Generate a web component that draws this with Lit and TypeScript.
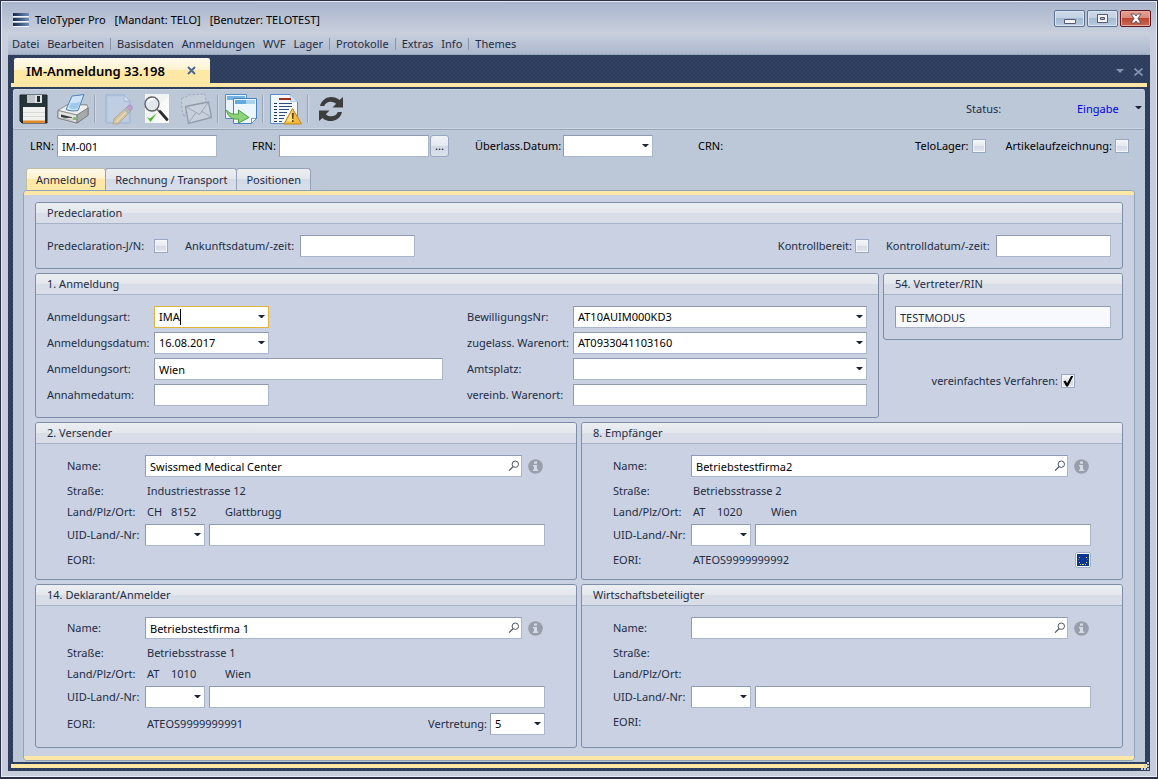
import { LitElement, html, css, svg, nothing } from "lit";
import { customElement, property } from "lit/decorators.js";

const controls = css`
  *,
  *::before,
  *::after {
    box-sizing: border-box;
  }
  button,
  input,
  select {
    font: inherit;
    color: inherit;
    margin: 0;
  }
  button {
    padding: 0;
    border: 0;
    background: none;
    display: inline-flex;
    align-items: center;
    justify-content: center;
  }
  svg {
    display: block;
    flex: none;
  }
  .box {
    display: block;
    width: 100%;
    min-width: 0;
    height: 22px;
    padding: 0 4px;
    border: 1px solid;
    border-color: #8e9bb3 #aab6cb #aab6cb #8e9bb3;
    border-radius: 0;
    background: #fff;
    color: #000;
    outline: none;
    appearance: none;
  }
  .box:disabled {
    background: #f7f9fd;
    color: #1e2c44;
    opacity: 1;
  }
  .combo {
    position: relative;
    display: block;
    min-width: 0;
  }
  .combo .arrow {
    position: absolute;
    right: 4px;
    top: 9px;
    pointer-events: none;
  }
  .combo.active .box {
    border-color: #e0b53a;
  }
  .caret {
    position: absolute;
    left: 26px;
    top: 3px;
    width: 1px;
    height: 16px;
    background: #000;
  }
  .tick {
    appearance: none;
    flex: none;
    width: 14px;
    height: 14px;
    border: 1px solid #98a8c2;
    background: linear-gradient(#f4f6f9, #e6e9ef 50%, #d5dae6 50%, #e0e4ec);
    box-shadow: inset 0 0 0 1px #f4f6fa;
    display: grid;
    place-items: center;
  }
  .tick:checked::after {
    content: "";
    width: 11px;
    height: 11px;
    background: #000;
    clip-path: polygon(8% 52%, 28% 46%, 42% 70%, 78% 4%, 98% 4%, 50% 100%, 34% 100%);
  }
`;

const arrow = html`<svg class="arrow" width="7" height="5" viewBox="0 0 7 5">
  <path d="M.5 0h6v1H6L4 3H3L1 1H.5z" fill="#1b2536" />
</svg>`;

const combo = (id: string, options: string[], cls = "", caret = false) => html`
  <span class="combo ${cls}">
    <select class="box" id=${id}>
      ${options.map((o) => html`<option>${o}</option>`)}
    </select>
    ${caret ? html`<span class="caret"></span>` : nothing} ${arrow}
  </span>
`;

@customElement("group-box")
export class GroupBox extends LitElement {
  @property() heading = "";

  static styles = css`
    :host {
      display: block;
      box-sizing: border-box;
      min-width: 0;
      border: 1px solid #7f8ea8;
      border-radius: 3px;
      overflow: hidden;
    }
    .heading {
      box-sizing: border-box;
      margin: 0;
      height: 21px;
      padding: 0 11px;
      border-bottom: 1px solid #a5b2c8;
      background: linear-gradient(#ebeef1, #e3e7ec 50%, #d9dde7 50%, #d9dde7);
      font-size: 11px;
      font-weight: 400;
      line-height: 20px;
    }
    .body {
      padding: 11px;
    }
  `;

  render() {
    return html`<h2 class="heading">${this.heading}</h2>
      <div class="body"><slot></slot></div>`;
  }
}

interface Party {
  heading: string;
  name: string;
  street: string;
  country: string;
  zip: string;
  city: string;
  eori: string;
  agency?: string;
  euCheck?: boolean;
}

@customElement("party-panel")
export class PartyPanel extends LitElement {
  @property({ attribute: false }) party!: Party;

  static styles = [
    controls,
    css`
      :host {
        display: flex;
        min-width: 0;
      }
      group-box {
        flex: 1;
      }
      .rows {
        padding: 0 20px;
        margin-bottom: -3px;
      }
      .row {
        display: flex;
        align-items: center;
        height: 22px;
      }
      .text {
        height: 21px;
      }
      .first {
        margin-bottom: 3px;
      }
      .uid {
        margin-top: 2px;
        margin-bottom: 3px;
      }
      .agency {
        height: 28px;
        padding: 2px 0 4px;
      }
      .label {
        flex: none;
        width: 78px;
        white-space: nowrap;
      }
      .value {
        padding-left: 2px;
      }
      .country {
        width: 26px;
      }
      .zip {
        width: 54px;
      }
      .search {
        position: relative;
        flex: 1;
        min-width: 0;
      }
      .search .box {
        padding-right: 20px;
      }
      .lens {
        position: absolute;
        right: 1px;
        top: 3px;
        width: 14px;
        height: 16px;
      }
      .info {
        margin: 0 2px 0 6px;
      }
      .land {
        flex: none;
        width: 60px;
        margin-right: 4px;
      }
      .end {
        margin-left: auto;
        display: flex;
        align-items: center;
        gap: 3px;
      }
      .vertretung {
        width: 55px;
      }
      .eu {
        width: 16px;
        height: 16px;
        border: 1px solid #a3afc4;
        border-radius: 2px;
        background: #f2f4f8;
      }
    `,
  ];

  render() {
    const p = this.party;
    return html`
      <group-box .heading=${p.heading}>
        <div class="rows">
          <div class="row first">
            <label class="label" for="name">Name:</label>
            <span class="search">
              <input class="box" id="name" type="text" .value=${p.name} />
              <button class="lens" aria-label="Suchen">
                <svg width="12" height="12" viewBox="0 0 12 12" fill="none" stroke="#4d5563">
                  <circle cx="7.3" cy="4.2" r="3.2" />
                  <path d="M5 6.7L1 10.6" stroke-width="1.2" />
                </svg>
              </button>
            </span>
            <button class="info" aria-label="Information">
              <svg width="15" height="15" viewBox="0 0 15 15">
                <circle cx="7.5" cy="7.5" r="7.3" fill="#989fab" />
                <path d="M6 2.5h3v2.3H6zM5 6h4v4.5h1.200v1.500H5v-1.500h1V7.500H5z" fill="#d3dae8" />
              </svg>
            </button>
          </div>
          <div class="row text">
            <span class="label">Straße:</span><span class="value">${p.street}</span>
          </div>
          <div class="row text">
            <span class="label">Land/Plz/Ort:</span>
            <span class="value country">${p.country}</span>
            <span class="zip">${p.zip}</span>
            <span>${p.city}</span>
          </div>
          <div class="row uid">
            <label class="label" for="uid-land">UID-Land/-Nr:</label>
            ${combo("uid-land", [""], "land")}
            <input class="box" type="text" aria-label="UID-Nr" />
          </div>
          <div class="row ${p.agency ? "agency" : ""}">
            <span class="label">EORI:</span><span class="value">${p.eori}</span>
            ${p.agency
              ? html`<span class="end"
                  ><label for="vertretung">Vertretung:</label>${combo(
                    "vertretung",
                    [p.agency],
                    "vertretung",
                  )}</span
                >`
              : nothing}
            ${p.euCheck
              ? html`<span class="end">
                  <button class="eu" aria-label="EORI prüfen">
                    <svg width="12" height="12" viewBox="0 0 12 12">
                      <path d="M0 0h12v12H0z" fill="#0a3590" />
                      <path
                        d="M2 3h1v1H2zM9 3h1v1H9zM2 8h1v1H2zM9 8h1v1H9zM3 10h1v1H3zM5 10h2v1H5zM8 10h1v1H8z"
                        fill="#e8d24a"
                      />
                      <path d="M1 5h1v1H1zM10 5h1v1h-1z" fill="#5c7188" />
                    </svg>
                  </button>
                </span>`
              : nothing}
          </div>
        </div>
      </group-box>
    `;
  }
}

const icons = {
  save: svg`
    <path d="M2 2h27v28H4l-2-2z" fill="#26343a"/>
    <path d="M2 2h27v28H4l-2-2z" fill="none" stroke="#1a2529"/>
    <path d="M9 2h15v8H9z" fill="#dfe2e4"/>
    <path d="M9 2h8v8H9z" fill="#bfc4c8"/>
    <path d="M19 3h3v6h-3z" fill="#222b30"/>
    <path d="M5 14h22v15H5z" fill="#f1f1ef"/>
    <path d="M5 19h22v1H5zM5 23h22v1H5z" fill="#d9dad8"/>
    <path d="M5 27.500h22V30H5z" fill="#e08a2a"/>`,
  print: svg`
    <path d="M1 17.500L10 12h20l1 3v7l-11 8L1 25z" fill="#d5d6d4" stroke="#74787a"/>
    <path d="M1 17.500L10 12h20l1 3-11 7z" fill="#efefed" stroke="#8c9092" stroke-width=".7"/>
    <path d="M9 16.500L15 3c4-.2 8-1 12-1.500l-6 16c-4 .8-8 .5-12-1z" fill="#cfe3f7" stroke="#4f83b8"/>
    <path d="M14 10c4 0 6-.3 9-1l-2.500 6.500c-3 .7-6 .4-8.500-.5z" fill="#9fc8ef"/>
    <path d="M1 17.500L20 22v8L1 25z" fill="#e2e3e1" stroke="#7a7e80" stroke-width=".8"/>
    <path d="M4 21.500l11 2.700v2.300L4 24z" fill="#33393c"/>
    <path d="M6 25l8 2 3-.5-2-1.500z" fill="#fff" stroke="#888" stroke-width=".5"/>
    <path d="M16.500 24l2.500.5v2.500l-2.500-.5z" fill="#63c04c"/>
    <path d="M20 22l11-7v7.500L20 30z" fill="#a7aaab" stroke="#6d7173" stroke-width=".7"/>`,
  edit: svg`
    <g opacity=".75">
    <path d="M4 2h18l6 6v22H4z" fill="#b9cbe4" stroke="#94acd0"/>
    <path d="M6 4h15v5h5v19H6z" fill="#c2d1e7"/>
    <path d="M22 2v6h6z" fill="#dce6f4" stroke="#94acd0" stroke-width=".8"/>
    <path d="M25 14l4 4-13 13-5 0 1-5z" fill="#e0c48a" stroke="#ad9462" stroke-width=".8"/>
    <path d="M27 16L14 29" stroke="#f2e4bd" stroke-width="1.500"/>
    <path d="M23 16l4 4" stroke="#9fb4bf" stroke-width="3"/>
    <path d="M24.500 14.500l2-2c2-1.500 5 1.500 3.500 3.500l-2 2z" fill="#c092cc" stroke="#9a74a8" stroke-width=".6"/>
    </g>`,
  check: svg`
    <path d="M4 1h24v29H4z" fill="#f2f3f4"/>
    <path d="M16 15L28 3v27H12z" fill="#fff" opacity=".6"/>
    <circle cx="11" cy="11" r="7" fill="#e2e8ee" stroke="#5a5f64" stroke-width="1.300"/>
    <path d="M7 9c1-3 4-4 7-3" stroke="#fff" stroke-width="1.800" fill="none"/>
    <path d="M16 16.500l3 2.500" stroke="#777" stroke-width="1.800"/>
    <path d="M19 18.500l7 8" stroke="#2b2d30" stroke-width="2.800" stroke-linecap="round"/>
    <path d="M6 24l3 1.500L16 20 9.500 29z" fill="#4db82f"/>`,
  mail: svg`
    <path d="M1.500 5l5-1L8 2l17-1 1 8-18 4-4 11-2-7z" fill="#c5cedb" stroke="#a3adbb" stroke-dasharray="2.500 1.500"/>
    <path d="M5.500 13.500l23-4.500 3 15.500-23 6z" fill="#c8d0dc" stroke="#909aa9" stroke-width="1.300"/>
    <path d="M5.500 13.500l14 8 9-12.500M8.500 30l7.500-10.500M31.500 24.500l-9.500-6" fill="none" stroke="#9ca6b4"/>`,
  transfer: svg`
    <path d="M.5 1.500h21v24h-21z" fill="#e9f3fc" stroke="#4f8cc9"/>
    <path d="M2 3h18v4H2z" fill="#6fb2e3"/>
    <path d="M8.500 5.500h23v20l-5 5h-18z" fill="#eef6fd" stroke="#4682c0"/>
    <path d="M10 7h20v4H10z" fill="#62a9df"/>
    <path d="M21 7h9v4h-9z" fill="#a8d2f0"/>
    <path d="M26.500 30.500v-5h5z" fill="#fff" stroke="#4682c0" stroke-width=".8"/>
    <path d="M1.500 17c3 4 7 4.500 12 4V17L24 24.500 13.500 30v-4C7 27 2.500 23 1.500 17z" fill="#8fd27c" stroke="#4da043"/>`,
  report: svg`
    <path d="M.5 1.500h20l7 7v22H.5z" fill="#f4f8fd" stroke="#5c8dc6"/>
    <path d="M20.500 1.500v7h7z" fill="#d3e3f4" stroke="#a9c3de" stroke-width=".7"/>
    <path d="M9 5h12v2H9z" fill="#9e2f1c"/>
    <path d="M4 10.500h3M4 13.500h3M4 16.500h3M4 19.500h3M4 22.500h3M4 25.500h3M4 28.500h3" stroke="#23324f"/>
    <path d="M9 10.500h13M9 13.500h13M9 16.500h10M9 19.500h8M9 22.500h6M9 25.500h5M9 28.500h3" stroke="#2f4c86"/>
    <path d="M22.500 15.500L31.500 31h-17.500z" fill="#f3bd39" stroke="#bd8420" stroke-linejoin="round"/>
    <path d="M22.500 17.500v11h-6z" fill="#fbdf86"/>
    <path d="M21.800 20h2l-.4 6h-1.200zM22 27.300h1.600v1.700H22z" fill="#5a3a08"/>`,
  refresh: svg`
    <path d="M4 13C6 4 17 1 23.500 7L27 4v10.500H16.500l3.700-3.700C16 7 9.500 8.500 8.200 13z" transform="translate(1 0)" fill="#3d3d3d"/>
    <path d="M4 13C6 4 17 1 23.500 7L27 4v10.500H16.500l3.700-3.700C16 7 9.500 8.500 8.200 13z" transform="rotate(180 15.500 16)" fill="#3d3d3d"/>`,
};

type IconName = keyof typeof icons;

const tools: (readonly [IconName, string] | null)[] = [
  ["save", "Speichern"],
  ["print", "Drucken"],
  null,
  ["edit", "Bearbeiten"],
  ["check", "Prüfen"],
  ["mail", "Senden"],
  null,
  ["transfer", "Übernehmen"],
  null,
  ["report", "Fehlerliste"],
  null,
  ["refresh", "Aktualisieren"],
];

const menu: (string | null)[] = [
  "Datei", "Bearbeiten", null, "Basisdaten", "Anmeldungen", "WVF", "Lager", null,
  "Protokolle", null, "Extras", "Info", null, "Themes",
];

const parties: Party[] = [
  {
    heading: "2. Versender", name: "Swissmed Medical Center",
    street: "Industriestrasse 12", country: "CH", zip: "8152", city: "Glattbrugg", eori: "",
  },
  {
    heading: "8. Empfänger", name: "Betriebstestfirma2",
    street: "Betriebsstrasse 2", country: "AT", zip: "1020", city: "Wien",
    eori: "ATEOS9999999992", euCheck: true,
  },
  {
    heading: "14. Deklarant/Anmelder", name: "Betriebstestfirma 1",
    street: "Betriebsstrasse 1", country: "AT", zip: "1010", city: "Wien",
    eori: "ATEOS9999999991", agency: "5",
  },
  {
    heading: "Wirtschaftsbeteiligter", name: "",
    street: "", country: "", zip: "", city: "", eori: "",
  },
];

@customElement("app-root")
export class AppRoot extends LitElement {
  static styles = [
    controls,
    css`
      :host {
        display: block;
        font: 11px/16px "Noto Sans", "Open Sans", sans-serif;
        color: #1e2c44;
      }
      .window {
        position: relative;
        min-height: 100vh;
        display: flex;
        flex-direction: column;
        padding: 1px 7px 6px;
        border: 1px solid #2a3049;
        border-bottom-width: 2px;
        background: linear-gradient(#a9b4cb, #c8cfdd 32px, #c8cddb 60px);
        box-shadow: inset 0 0 0 1px #e9ecf3;
      }
      .titlebar {
        display: flex;
        align-items: center;
        height: 31px;
        padding: 5px 0 0 5px;
        color: #000;
      }
      .title {
        display: flex;
        gap: 9px;
        margin: 0 auto 0 6px;
        font-size: 11px;
        font-weight: 400;
        white-space: nowrap;
      }
      .win-buttons {
        display: flex;
        gap: 2px;
        align-self: flex-start;
        margin: 3px -1px 0 0;
      }
      .win {
        width: 31px;
        height: 17px;
        border: 1px solid #5d7394;
        border-radius: 2px;
        background: linear-gradient(#cfdaea, #c3d1e4 45%, #a5b9d3 50%, #bacbe0);
        box-shadow: inset 0 0 0 1px #dbe4f0;
      }
      .win.quit {
        border-color: #5a1420;
        background: linear-gradient(#e3a093, #d98a7c 45%, #bb4632 50%, #cb6a54);
        box-shadow: inset 0 0 0 1px #e8aba0;
      }
      .menu {
        display: flex;
        align-items: center;
        gap: 2px;
        height: 22px;
        padding: 0 1px;
        border-bottom: 1px solid #98a5bb;
        background: linear-gradient(#c8d0df, #acb8cc);
      }
      .menu-item {
        padding: 0 3px;
      }
      .menu-sep {
        width: 1px;
        height: 12px;
        margin: 0 1px;
        background: #8593aa;
      }
      .desk {
        flex: 1;
        display: flex;
        flex-direction: column;
        padding: 3px 3px;
        background-color: #2b3b59;
        background-image: radial-gradient(#35486a 0.5px, transparent 1px),
          radial-gradient(#35486a 0.5px, transparent 1px);
        background-size: 4px 4px;
        background-position: 0 0, 2px 2px;
      }
      .docs {
        display: flex;
        align-items: center;
        height: 25px;
        padding: 0 2px 0 3px;
      }
      .doc {
        display: flex;
        align-items: center;
        width: 196px;
        height: 25px;
        padding: 0 14px 0 12px;
        border-radius: 2px 2px 0 0;
        background: linear-gradient(#fffbf0, #fff2cc 50%, #ffe8a6 50%, #ffe8a6);
        color: #000;
        font-size: 13px;
        font-weight: 600;
        white-space: nowrap;
      }
      .doc-close {
        margin-left: auto;
      }
      .docs-end {
        display: flex;
        gap: 10px;
        margin-left: auto;
        padding: 2px 2px 0 0;
      }
      .rule {
        height: 4px;
        background: #ffe8a6;
      }
      .sheet {
        flex: 1;
        display: flex;
        flex-direction: column;
        margin: 2px 2px;
        padding-bottom: 1px;
        border-radius: 3px 3px 0 0;
        background: #bcc7d8;
      }
      .toolbar {
        display: flex;
        align-items: center;
        height: 41px;
        padding: 0 3px 0 1px;
        border-bottom: 1px solid #98a5b8;
        border-radius: 3px;
        box-shadow: inset 1px 1px 0 #ccd5e2, inset 0 -1px 0 #ccd5e2;
      }
      .tool {
        width: 39px;
        height: 36px;
      }
      .tool-sep {
        width: 2px;
        height: 28px;
        margin: 0 2px;
        background: linear-gradient(90deg, #98a5b8 50%, #d0d8e4 50%);
      }
      .status {
        display: flex;
        align-items: center;
        margin-left: auto;
      }
      .status-label {
        width: 107px;
      }
      .status .box {
        width: 69px;
        border-color: transparent;
        background: none;
        color: #0000f0;
        padding: 0 3px;
      }
      .status .arrow {
        right: 0;
        top: 8px;
      }
      .keys {
        display: flex;
        align-items: center;
        padding: 5px 16px 11px 17px;
        color: #000;
      }
      .field {
        display: flex;
        align-items: center;
        white-space: nowrap;
      }
      .keys .frn {
        margin: 0 26px 0 35px;
      }
      .short {
        width: 27px;
      }
      .release {
        width: 88px;
      }
      .keys .crn {
        margin: 0 auto 0 45px;
      }
      .w90 {
        width: 90px;
      }
      .w115 {
        width: 115px;
      }
      .w150 {
        width: 150px;
      }
      .w160 {
        width: 160px;
      }
      .more {
        width: 19px;
        height: 22px;
        margin-left: 1px;
        border: 1px solid #98a8c2;
        border-radius: 3px;
        background: linear-gradient(#f0f2f6, #e4e8ef 50%, #d1d8e6 50%, #dce1eb);
      }
      .check {
        gap: 3px;
      }
      .check + .check {
        margin-left: 20px;
      }
      .tabs {
        display: flex;
        padding: 0 13px;
        height: 22px;
      }
      .tab {
        height: 22px;
        padding: 0 9px;
        margin-right: -1px;
        border: 1px solid #94a1b7;
        border-bottom: 0;
        border-radius: 3px 3px 0 0;
        background: linear-gradient(#eceef1, #e2e6eb 50%, #d3dae7 50%, #d9dfe9);
        white-space: nowrap;
      }
      .tab.on {
        background: linear-gradient(#fffaec, #fff1c9 50%, #ffe8a6 50%, #ffe8a6);
        border-color: #c2bda9;
      }
      .page {
        flex: 1;
        display: flex;
        flex-direction: column;
        margin: 0 10px;
        border: 1px solid #94a4b8;
        border-radius: 4px;
        overflow: hidden;
        background: #c9d1e2;
      }
      .groups {
        flex: 1;
        display: grid;
        align-content: start;
        gap: 4px;
        padding: 7px 11px 8px;
      }
      .split {
        display: grid;
        grid-template-columns: minmax(0, 1fr) 240px;
        gap: 4px;
      }
      .halves {
        display: grid;
        grid-template-columns: minmax(0, 1fr) minmax(0, 1fr);
        gap: 4px;
      }
      .pre {
        display: flex;
        align-items: center;
        justify-content: space-between;
      }
      .pre .part {
        display: flex;
        align-items: center;
      }
      .jn {
        width: 121px;
        justify-content: space-between;
        margin-right: 17px;
      }
      .ready {
        margin-right: 17px;
      }
      .arrival {
        width: 115px;
      }
      .control {
        width: 110px;
      }
      .form-cols {
        display: grid;
        grid-template-columns: minmax(0, 396fr) minmax(0, 400fr);
        column-gap: 24px;
      }
      .form-col {
        display: grid;
        grid-template-columns: 107px minmax(0, 1fr);
        gap: 4px 0;
        align-items: center;
        white-space: nowrap;
      }
      .form-col.right {
        grid-template-columns: 106px minmax(0, 1fr);
      }
      .simple {
        justify-content: flex-end;
        gap: 3px;
        margin: 33px 48px 0 0;
      }
      .grip {
        position: absolute;
        right: 7px;
        bottom: 6px;
      }
    `,
  ];

  render() {
    return html`
      <div class="window">
        <header class="titlebar">
          <svg width="16" height="14" viewBox="0 0 16 14">
            <defs>
              <linearGradient id="bar">
                <stop offset="0" stop-color="#16294a" />
                <stop offset="1" stop-color="#6f8fbf" />
              </linearGradient>
            </defs>
            <path d="M0 0h16v3H0zM0 5h16v3H0zM0 10h16v3H0z" fill="url(#bar)" />
            <path d="M0 3h16v1H0zM0 8h16v1H0zM0 13h16v1H0z" fill="#f3f5f8" />
          </svg>
          <h1 class="title">
            <span>TeloTyper Pro</span><span>[Mandant: TELO]</span
            ><span>[Benutzer: TELOTEST]</span>
          </h1>
          <div class="win-buttons">
            <button class="win" aria-label="Minimieren">
              <svg width="12" height="12" viewBox="0 0 12 12">
                <path d="M.5 6.500h11v4H.5z" fill="#f4f4f4" stroke="#545b70" />
              </svg>
            </button>
            <button class="win" aria-label="Maximieren">
              <svg width="11" height="9" viewBox="0 0 11 9">
                <path d="M.5.500h10v8H.5z" fill="#f4f4f4" stroke="#545b70" />
                <path d="M3.500 3.500h4v2h-4z" fill="#a9b9d0" stroke="#545b70" />
              </svg>
            </button>
            <button class="win quit" aria-label="Schließen">
              <svg width="12" height="11" viewBox="0 0 12 11">
                <path
                  d="M1 1h3.500L6 3l1.500-2H11L8 5.500 11 10H7.500L6 8l-1.500 2H1l3-4.500z"
                  fill="#fafafa"
                  stroke="#5a4a58"
                  stroke-width=".9"
                />
              </svg>
            </button>
          </div>
        </header>
        <nav class="menu">
          ${menu.map((m) =>
            m
              ? html`<button class="menu-item">${m}</button>`
              : html`<span class="menu-sep"></span>`,
          )}
        </nav>
        <main class="desk">
          <div class="docs">
            <div class="doc">
              <span>IM-Anmeldung 33.198</span>
              <button class="doc-close" aria-label="Tab schließen">
                <svg width="9" height="9" viewBox="0 0 9 9">
                  <path d="M1 1l7 7M8 1L1 8" stroke="#4d6a94" stroke-width="2" />
                </svg>
              </button>
            </div>
            <div class="docs-end">
              <button aria-label="Fensterliste">
                <svg width="8" height="5" viewBox="0 0 8 5">
                  <path d="M0 0h8L4 4z" fill="#8593ad" />
                </svg>
              </button>
              <button aria-label="Schließen">
                <svg width="9" height="8" viewBox="0 0 9 8">
                  <path d="M.5.500l8 7M8.500.500l-8 7" stroke="#8593ad" stroke-width="1.600" />
                </svg>
              </button>
            </div>
          </div>
          <div class="rule"></div>
          <div class="sheet">
            <div class="toolbar">
              ${tools.map((t) =>
                t
                  ? html`<button class="tool" aria-label=${t[1]}>
                      <svg width="32" height="32" viewBox="0 0 32 32">${icons[t[0]]}</svg>
                    </button>`
                  : html`<span class="tool-sep"></span>`,
              )}
              <div class="status">
                <label class="status-label" for="status">Status:</label>
                ${combo("status", ["Eingabe"])}
              </div>
            </div>
            <div class="keys">
              <div class="field">
                <label class="short" for="lrn">LRN:</label>
                <input class="box w160" id="lrn" type="text" value="IM-001" />
              </div>
              <div class="field frn">
                <label class="short" for="frn">FRN:</label>
                <input class="box w150" id="frn" type="text" />
                <button class="more" aria-label="FRN suchen">...</button>
              </div>
              <div class="field">
                <label class="release" for="release">Überlass.Datum:</label>
                ${combo("release", [""], "w90")}
              </div>
              <span class="crn">CRN:</span>
              <label class="field check">TeloLager:<input class="tick" type="checkbox" /></label>
              <label class="field check"
                >Artikelaufzeichnung:<input class="tick" type="checkbox"
              /></label>
            </div>
            <div class="tabs" role="tablist">
              <button class="tab on" role="tab" aria-selected="true">Anmeldung</button>
              <button class="tab" role="tab">Rechnung / Transport</button>
              <button class="tab" role="tab">Positionen</button>
            </div>
            <section class="page">
              <div class="rule"></div>
              <div class="groups">
                <group-box heading="Predeclaration">
                  <div class="pre">
                    <div class="part">
                      <label class="field jn"
                        >Predeclaration-J/N:<input class="tick" type="checkbox"
                      /></label>
                      <label class="field arrival" for="arrival">Ankunftsdatum/-zeit:</label>
                      <input class="box w115" id="arrival" type="text" />
                    </div>
                    <div class="part">
                      <label class="field check ready"
                        >Kontrollbereit:<input class="tick" type="checkbox"
                      /></label>
                      <label class="field control" for="control">Kontrolldatum/-zeit:</label>
                      <input class="box w115" id="control" type="text" />
                    </div>
                  </div>
                </group-box>
                <div class="split">
                  <group-box heading="1. Anmeldung">
                    <div class="form-cols">
                      <div class="form-col">
                        <label for="art">Anmeldungsart:</label>
                        ${combo("art", ["IMA"], "w115 active", true)}
                        <label for="datum">Anmeldungsdatum:</label>
                        ${combo("datum", ["16.08.2017"], "w115")}
                        <label for="ort">Anmeldungsort:</label>
                        <input class="box" id="ort" type="text" value="Wien" />
                        <label for="annahme">Annahmedatum:</label>
                        <input class="box w115" id="annahme" type="text" />
                      </div>
                      <div class="form-col right">
                        <label for="bew">BewilligungsNr:</label>
                        ${combo("bew", ["AT10AUIM000KD3"])}
                        <label for="zug">zugelass. Warenort:</label>
                        ${combo("zug", ["AT0933041103160"])}
                        <label for="amt">Amtsplatz:</label>
                        ${combo("amt", [""])}
                        <label for="ver">vereinb. Warenort:</label>
                        <input class="box" id="ver" type="text" />
                      </div>
                    </div>
                  </group-box>
                  <div>
                    <group-box heading="54. Vertreter/RIN">
                      <input
                        class="box"
                        type="text"
                        aria-label="Vertreter/RIN"
                        value="TESTMODUS"
                        disabled
                      />
                    </group-box>
                    <label class="field simple"
                      >vereinfachtes Verfahren:<input class="tick" type="checkbox" checked
                    /></label>
                  </div>
                </div>
                <div class="halves">
                  ${parties.map((p) => html`<party-panel .party=${p}></party-panel>`)}
                </div>
              </div>
              <div class="rule"></div>
            </section>
          </div>
          <div class="rule"></div>
        </main>
        <svg class="grip" width="10" height="10" viewBox="0 0 10 10">
          <path d="M7 1h2v2H7zM4 4h2v2H4zM7 4h2v2H7zM1 7h2v2H1zM4 7h2v2H4zM7 7h2v2H7z" fill="#c0c9d8" />
        </svg>
      </div>
    `;
  }
}
